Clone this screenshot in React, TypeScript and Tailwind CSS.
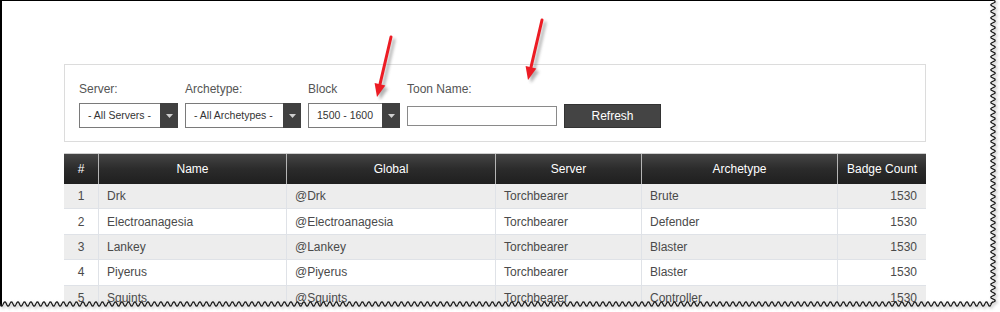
import React from "react";

const rows = [
  ["1", "Drk", "@Drk", "Torchbearer", "Brute", "1530"],
  ["2", "Electroanagesia", "@Electroanagesia", "Torchbearer", "Defender", "1530"],
  ["3", "Lankey", "@Lankey", "Torchbearer", "Blaster", "1530"],
  ["4", "Piyerus", "@Piyerus", "Torchbearer", "Blaster", "1530"],
  ["5", "Squints", "@Squints", "Torchbearer", "Controller", "1530"],
  ["6", "Vexx", "@Vexx", "Torchbearer", "Tanker", "1530"],
];

function Caret() {
  return (
    <svg width="7" height="4" viewBox="0 0 7 4">
      <path d="M0 0 L7 0 L3.5 4 Z" fill="#cfcfcf" />
    </svg>
  );
}

function Select({ label, value, w }: { label: string; value: string; w: string }) {
  return (
    <div className="flex flex-col">
      <div className="h-[14px] leading-[14px] text-[12px] text-[#555] mb-[7px]">{label}</div>
      <div className={`flex h-[25px] ${w}`}>
        <div className="flex-1 flex items-center border border-r-0 border-[#7a7a7a] bg-white pl-[8px] text-[10.5px] text-[#333] whitespace-nowrap">
          {value}
        </div>
        <div className="w-[18px] bg-[#404040] flex items-center justify-center">
          <Caret />
        </div>
      </div>
    </div>
  );
}

function wavePts() {
  const pts: string[] = [];
  for (let y = 0; y <= 304; y += 1) {
    const x = 993 + 2.3 * Math.sin((2 * Math.PI * y) / 6.5);
    pts.push(`${x.toFixed(2)},${y}`);
  }
  for (let x = 993; x >= 0; x -= 1) {
    const y = 304 + 2.3 * Math.sin((2 * Math.PI * x) / 6.5);
    pts.push(`${x},${y.toFixed(2)}`);
  }
  return pts;
}

function Arrow({ tx, ty, hx, hy }: { tx: number; ty: number; hx: number; hy: number }) {
  const dx = hx - tx;
  const dy = hy - ty;
  const len = Math.sqrt(dx * dx + dy * dy);
  const ux = dx / len;
  const uy = dy / len;
  const bx = hx - 13 * ux;
  const by = hy - 13 * uy;
  const px = -uy * 5.5;
  const py = ux * 5.5;
  const head = `M${hx},${hy} L${bx + px},${by + py} L${bx - px},${by - py} Z`;
  return (
    <g>
      <g transform="translate(3,3)" filter="url(#blur2)" opacity="0.55">
        <line x1={tx} y1={ty} x2={bx} y2={by} stroke="#777" strokeWidth="3" strokeLinecap="round" />
        <path d={head} fill="#777" />
      </g>
      <line x1={tx} y1={ty} x2={bx} y2={by} stroke="#ec1c24" strokeWidth="3" strokeLinecap="round" />
      <path d={head} fill="#ec1c24" />
    </g>
  );
}

export default function App() {
  const pts = wavePts();
  const wave = "M" + pts.join(" L");
  const fillPath = wave + " L0,312 L1000,312 L1000,0 Z";
  const cols = "grid grid-cols-[35px_188px_209px_146px_196px_88px]";
  return (
    <div className="relative w-[1000px] h-[312px] overflow-hidden bg-white font-['Liberation_Sans',Arial,sans-serif]">
      <div className="h-[312px] border-t border-l-2 border-black pt-[63px] pl-[62px]">
        <div className="w-[862px]">
          {/* filter panel */}
          <div className="border border-[#dcdcdc] pt-[17px] pl-[14px] pb-[13px] flex items-end gap-[7px]">
            <Select label="Server:" value="- All Servers -" w="w-[99px]" />
            <Select label="Archetype:" value="- All Archetypes -" w="w-[116px]" />
            <Select label="Block" value="1500 - 1600" w="w-[92px]" />
            <div className="flex flex-col">
              <div className="h-[14px] leading-[14px] text-[12px] text-[#555] mb-[10px]">Toon Name:</div>
              <div className="w-[150px] h-[20px] border border-[#8a8a8a] bg-white mb-[2px]" />
            </div>
            <button className="w-[97px] h-[24px] bg-[#444] border border-[#333] text-white text-[12px] leading-none">
              Refresh
            </button>
          </div>

          {/* table */}
          <div className="mt-[11px] border-t border-[#cfcfcf]">
            <div className={`${cols} h-[30px] bg-linear-to-b from-[#454545] via-[#2b2b2b] to-[#1f1f1f] text-white text-[12px]`}>
              {["#", "Name", "Global", "Server", "Archetype", "Badge Count"].map((h, i) => (
                <div
                  key={h}
                  className={`flex items-center justify-center whitespace-nowrap ${i < 5 ? "border-r border-[#b5b5b5]" : ""}`}
                >
                  {h}
                </div>
              ))}
            </div>
            {rows.map((r, ri) => (
              <div
                key={r[0]}
                className={`${cols} h-[25.4px] border-b border-[#dfe2e7] text-[12px] text-[#4a4a4a] ${ri % 2 === 0 ? "bg-[#ededed]" : "bg-white"}`}
              >
                {r.map((c, i) => (
                  <div
                    key={i}
                    className={`flex items-center whitespace-nowrap ${i < 5 ? "border-r border-[#dfe2e7]" : ""} ${
                      i === 0 ? "justify-center" : i === 5 ? "justify-end pr-[9px]" : "pl-2"
                    }`}
                  >
                    {c}
                  </div>
                ))}
              </div>
            ))}
          </div>
        </div>
      </div>

      {/* torn edges and annotation arrows */}
      <svg className="absolute inset-0 pointer-events-none" width="1000" height="312" viewBox="0 0 1000 312">
        <defs>
          <filter id="blur2" x="-20%" y="-20%" width="140%" height="140%">
            <feGaussianBlur stdDeviation="1.5" />
          </filter>
        </defs>
        <path d={fillPath} fill="#ffffff" />
        <path d={wave} fill="none" stroke="#9a9a9a" strokeWidth="2" opacity="0.5" transform="translate(1.5,1.5)" filter="url(#blur2)" />
        <path d={wave} fill="none" stroke="#1a1a1a" strokeWidth="1.2" />
        <Arrow tx={391} ty={37} hx={377} hy={97} />
        <Arrow tx={542} ty={20} hx={528} hy={80} />
      </svg>
    </div>
  );
}
